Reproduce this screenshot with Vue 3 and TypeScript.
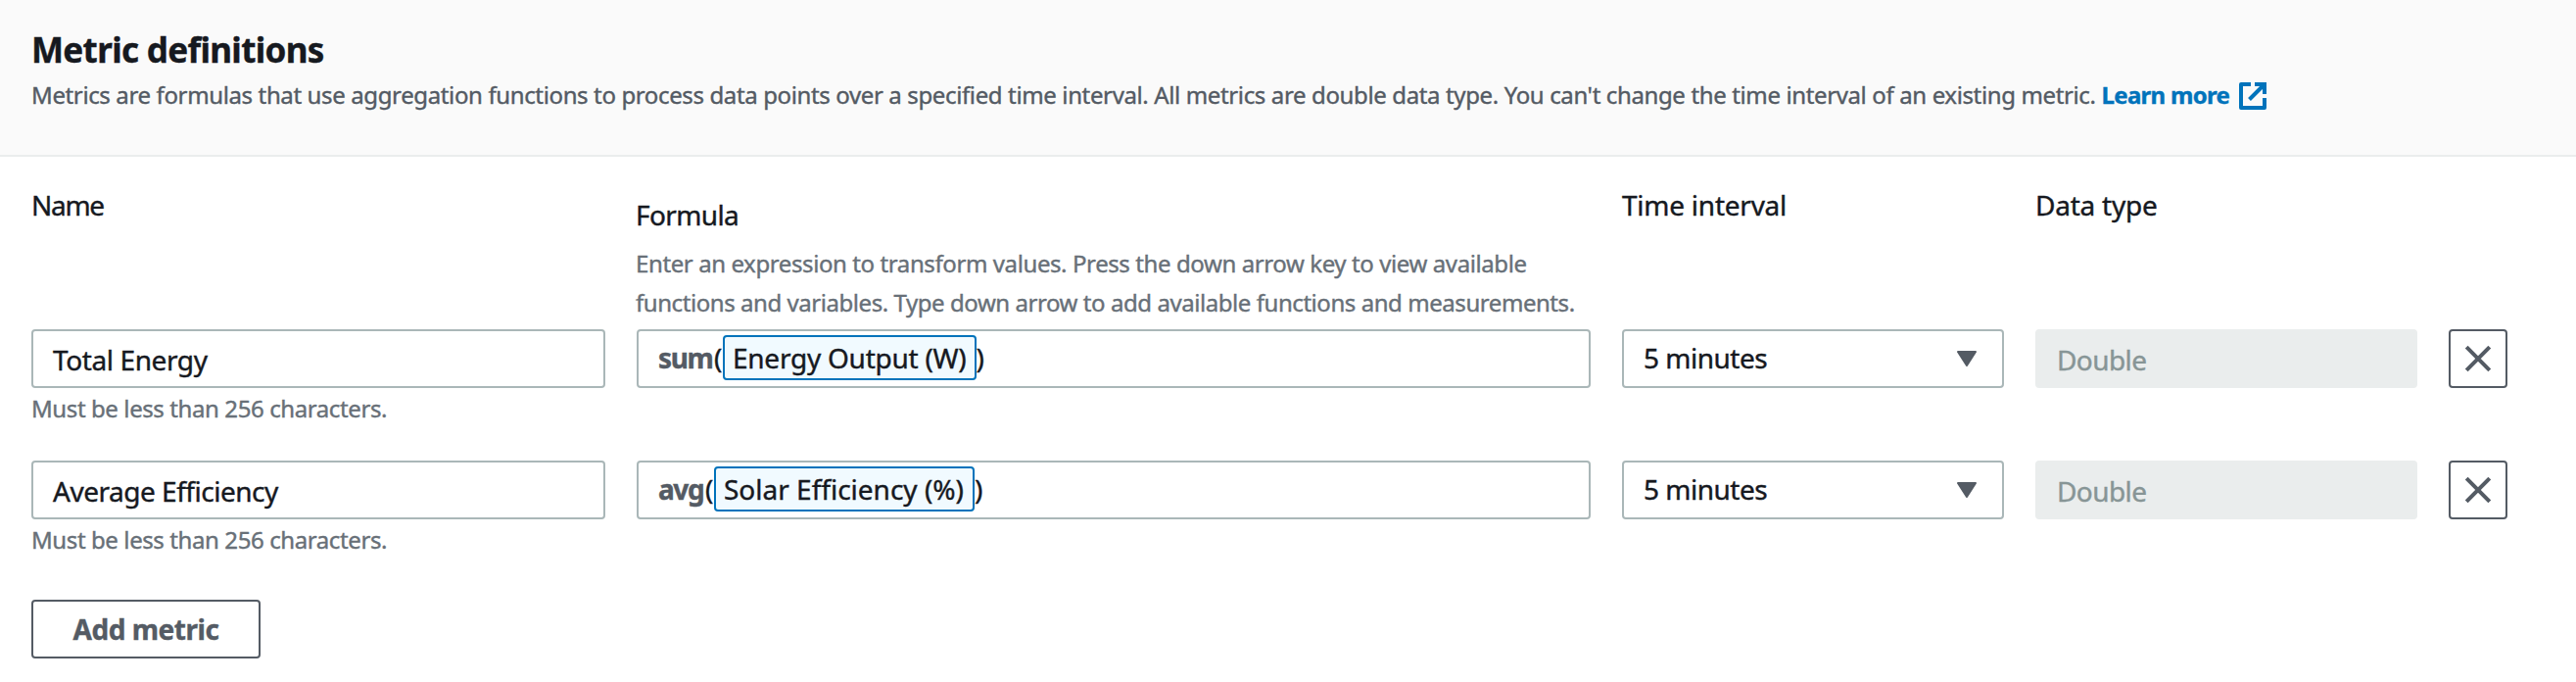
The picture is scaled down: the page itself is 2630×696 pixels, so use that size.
<script setup lang="ts">
interface Metric {
  id: string
  name: string
  fn: string
  variable: string
  interval: string
  dataType: string
}

const metrics: Metric[] = [
  { id: 'total', name: 'Total Energy', fn: 'sum', variable: 'Energy Output (W)', interval: '5 minutes', dataType: 'Double' },
  { id: 'average', name: 'Average Efficiency', fn: 'avg', variable: 'Solar Efficiency (%)', interval: '5 minutes', dataType: 'Double' },
]
</script>

<template>
  <section class="panel">
    <header class="header">
      <h2 class="title">Metric definitions</h2>
      <p class="description">
        <span>Metrics are formulas that use aggregation functions to process data points over a specified time interval. All metrics are double data type. You can't change the time interval of an existing metric.</span>
        <a class="link">
          <span>Learn more</span>
          <svg class="external" viewBox="0 0 28 28" width="28" height="28" aria-hidden="true">
            <path d="M12 2H2V26H26V16" fill="none" stroke="currentColor" stroke-width="4" stroke-linejoin="round" />
            <path d="M16 2H26V12M25 3L10.500 17.500" fill="none" stroke="currentColor" stroke-width="4" />
          </svg>
        </a>
      </p>
    </header>

    <div class="body">
      <div class="grid heads">
        <div class="label name-label">Name</div>
        <div class="formula-head">
          <div class="label formula-label">Formula</div>
          <p class="hint">
            <span class="hint-first">Enter an expression to transform values. Press the down arrow key to view available</span><br />
            <span>functions and variables. Type down arrow to add available functions and measurements.</span>
          </p>
        </div>
        <div class="label">Time interval</div>
        <div class="label">Data type</div>
      </div>

      <div class="rows">
        <div v-for="metric in metrics" :key="metric.id" class="grid" :class="metric.id">
          <div>
            <div class="control name">{{ metric.name }}</div>
            <p class="constraint">Must be less than 256 characters.</p>
          </div>
          <div class="control formula">
            <b class="fn">{{ metric.fn }}</b><span class="open">(</span><span class="token">{{ metric.variable }}</span><span>)</span>
          </div>
          <div class="control select">
            <span>{{ metric.interval }}</span>
            <svg viewBox="0 0 20 16" width="20" height="16" aria-hidden="true">
              <path d="M1 1H19L10 15Z" fill="currentColor" stroke="currentColor" stroke-width="2" stroke-linejoin="round" />
            </svg>
          </div>
          <div class="control disabled">{{ metric.dataType }}</div>
          <button class="remove" type="button" aria-label="Remove metric">
            <svg viewBox="0 0 28 28" width="28" height="28" aria-hidden="true">
              <path d="M2.200 2.200L25.800 25.800M25.800 2.200L2.200 25.800" fill="none" stroke="currentColor" stroke-width="4" />
            </svg>
          </button>
        </div>
      </div>

      <button class="add" type="button">Add metric</button>
    </div>
  </section>
</template>

<style>
body {
  margin: 0;
  background: #fff;
}
</style>

<style scoped>
.panel {
  height: 696px;
  overflow: hidden;
  box-sizing: border-box;
  background: #fff;
  color: #16191f;
  font: 28px/44px "Noto Sans", sans-serif;
  letter-spacing: -0.4px;
  white-space: nowrap;
  -webkit-text-stroke: 0.4px currentColor;
}

.panel * {
  box-sizing: border-box;
}

.header {
  height: 160px;
  padding: 29px 32px 0;
  background: #fafafa;
  border-bottom: 2px solid #eaeded;
}

.title {
  margin: 0;
  font-size: 35px;
  font-weight: 700;
  line-height: 44px;
  letter-spacing: -0.65px;
}

.description {
  display: flex;
  margin: 6px 0 0;
  color: #545b64;
  font-size: 24px;
  line-height: 36px;
  letter-spacing: -0.37px;
}

.link {
  display: flex;
  align-items: center;
  margin-left: 6px;
  color: #0073bb;
  font-weight: 700;
  letter-spacing: -0.7px;
}

.external {
  margin: 2px 0 0 10px;
}

.body {
  padding: 27px 32px 0;
}

.grid {
  display: grid;
  grid-template-columns: 586px 974px 390px 390px 60px;
  column-gap: 32px;
  align-items: start;
}

.heads {
  height: 149px;
}

.label {
  letter-spacing: -0.24px;
}

.name-label {
  letter-spacing: -1.3px;
}

.formula-head {
  margin-left: -1px;
}

.formula-label {
  margin-top: 10px;
  letter-spacing: -0.62px;
}

.hint {
  margin: 8px 0 0;
  color: #687078;
  font-size: 24px;
  line-height: 40px;
  letter-spacing: -0.44px;
}

.hint-first {
  letter-spacing: -0.4px;
}

.rows {
  display: grid;
  gap: 35px;
}

.control {
  display: flex;
  align-items: center;
  height: 60px;
  padding: 0 20px;
  border: 2px solid #aab7b8;
  border-radius: 4px;
}

.name {
  padding-top: 2px;
}

.average .name {
  letter-spacing: -0.48px;
}

.constraint {
  margin: 3px 0 0;
  color: #687078;
  font-size: 24px;
  line-height: 36px;
}

.formula {
  padding-bottom: 2px;
}

.fn {
  width: 57px;
  color: #545b64;
  letter-spacing: -1.4px;
}

.average .fn {
  width: 48px;
}

.open {
  width: 9px;
}

.token {
  display: flex;
  align-items: center;
  height: 46px;
  padding: 0 8px 1px 8px;
  border: 2px solid #0073bb;
  border-radius: 4px;
  background: #f1faff;
  letter-spacing: -0.25px;
}

.average .token {
  padding-right: 9px;
  letter-spacing: 0;
}

.select {
  justify-content: space-between;
  padding: 0 26px 2px 20px;
  letter-spacing: -0.5px;
}

.select svg {
  margin-top: 2px;
  color: #545b64;
}

.disabled {
  padding: 2px 20px 0;
  border-color: #eaeded;
  background: #eaeded;
  color: #879596;
  letter-spacing: -0.6px;
}

.remove {
  display: flex;
  align-items: center;
  justify-content: center;
  width: 60px;
  height: 60px;
  padding: 0;
  border: 2px solid #545b64;
  border-radius: 4px;
  background: #fff;
  color: #545b64;
}

.add {
  display: block;
  width: 234px;
  height: 60px;
  margin-top: 43px;
  padding: 0 0 1px;
  border: 2px solid #545b64;
  border-radius: 4px;
  background: #fff;
  color: #545b64;
  font: 700 28px/44px "Noto Sans", sans-serif;
  letter-spacing: -0.46px;
}
</style>
